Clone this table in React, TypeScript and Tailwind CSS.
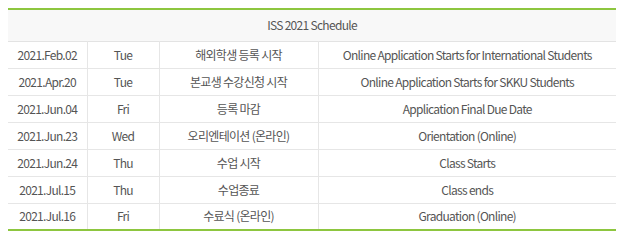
import React from "react";

type Row = { date: string; day: string; ko: string; en: string };

const rows: Row[] = [
  { date: "2021.Feb.02", day: "Tue", ko: "해외학생 등록 시작", en: "Online Application Starts for International Students" },
  { date: "2021.Apr.20", day: "Tue", ko: "본교생 수강신청 시작", en: "Online Application Starts for SKKU Students" },
  { date: "2021.Jun.04", day: "Fri", ko: "등록 마감", en: "Application Final Due Date" },
  { date: "2021.Jun.23", day: "Wed", ko: "오리엔테이션 (온라인)", en: "Orientation (Online)" },
  { date: "2021.Jun.24", day: "Thu", ko: "수업 시작", en: "Class Starts" },
  { date: "2021.Jul.15", day: "Thu", ko: "수업종료", en: "Class ends" },
  { date: "2021.Jul.16", day: "Fri", ko: "수료식 (온라인)", en: "Graduation (Online)" },
];

const App = () => {
  return (
    <div
      className="w-[623px] h-[243px] bg-white pt-2 pl-2"
      style={{ fontFamily: '"Noto Sans CJK KR", sans-serif' }}
    >
      <table className="w-[608px] border-collapse table-fixed text-[12px] text-[#555] tracking-[-0.7px] whitespace-nowrap">
        <colgroup>
          <col className="w-[79px]" />
          <col className="w-[72px]" />
          <col className="w-[159px]" />
          <col className="w-[298px]" />
        </colgroup>
        <thead>
          <tr className="border-t-2 border-[#8dc63f] bg-[#f8f8f8] border-b border-b-[#e3e3e3]">
            <th colSpan={4} className="h-[32px] font-normal text-center leading-none p-0">
              ISS 2021 Schedule
            </th>
          </tr>
        </thead>
        <tbody>
          {rows.map((r, i) => (
            <tr
              key={r.date}
              className={
                i === rows.length - 1
                  ? "border-b-2 border-[#8dc63f]"
                  : "border-b border-[#e6e6e6]"
              }
            >
              <td className="h-[27px] text-center p-0 leading-none">{r.date}</td>
              <td className="text-center border-l border-[#e6e6e6] p-0 leading-none">{r.day}</td>
              <td className="text-center border-l border-[#e6e6e6] p-0 leading-none">{r.ko}</td>
              <td className="text-center border-l border-[#e6e6e6] p-0 leading-none">{r.en}</td>
            </tr>
          ))}
        </tbody>
      </table>
    </div>
  );
};

export default App;
